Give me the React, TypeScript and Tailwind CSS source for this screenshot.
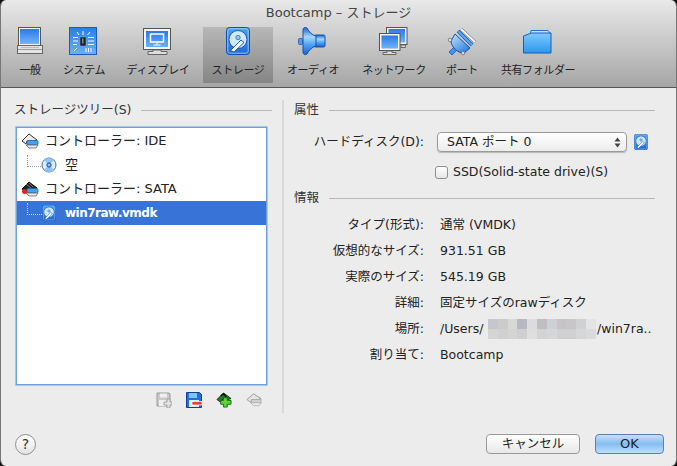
const font = "font-['DejaVu_Sans','Noto_Sans_CJK_JP',sans-serif]";

function MonitorIcon() {
  return (
    <svg width="32" height="32" viewBox="0 0 32 32">
      <defs>
        <linearGradient id="gen-screen" x1="0" y1="0" x2="0" y2="1">
          <stop offset="0" stopColor="#2f78e8" />
          <stop offset="1" stopColor="#6fb4fb" />
        </linearGradient>
      </defs>
      <rect x="4.5" y="0.5" width="22" height="18" fill="#f4f4f4" stroke="#555" />
      <rect x="6" y="2" width="19" height="15" fill="url(#gen-screen)" />
      <rect x="3.5" y="18.5" width="25" height="8" fill="#e4e4e4" stroke="#666" />
      <line x1="4" y1="22.500" x2="28" y2="22.500" stroke="#999" />
      <line x1="7" y1="20.500" x2="25" y2="20.500" stroke="#bbb" />
    </svg>
  );
}

function SystemIcon() {
  return (
    <svg width="32" height="32" viewBox="0 0 32 32">
      <defs>
        <linearGradient id="sys-bg" x1="0" y1="0" x2="0" y2="1">
          <stop offset="0" stopColor="#2a7de8" />
          <stop offset="1" stopColor="#67b2f8" />
        </linearGradient>
      </defs>
      <rect x="1.5" y="0.5" width="27" height="27" fill="url(#sys-bg)" stroke="#1c5cc0" />
      <rect x="12" y="10" width="6" height="9" fill="#222" stroke="#9ab" strokeWidth="0.5" />
      <rect x="14" y="11.500" width="1.500" height="5" fill="#888" />
      <g stroke="#fff" strokeWidth="1">
        <path d="M15 4v4M22 5l-2.500 3M5 10.500h5M5 14h5M5 17.500h4M20 10.500h6M20 14h6M20 17.500h6M6 24l3-3M9 5l2 3" />
        <path d="M18 21v4M20.500 21v4M23 21v4" />
      </g>
    </svg>
  );
}

function DisplayIcon() {
  return (
    <svg width="32" height="32" viewBox="0 0 32 32">
      <defs>
        <linearGradient id="dis-screen" x1="0" y1="0" x2="0" y2="1">
          <stop offset="0" stopColor="#2c78e6" />
          <stop offset="1" stopColor="#68b0fa" />
        </linearGradient>
      </defs>
      <rect x="1.5" y="1.500" width="27" height="21" fill="#f5f5f5" stroke="#555" />
      <rect x="4" y="4" width="22" height="16" fill="url(#dis-screen)" />
      <rect x="8.500" y="7" width="13" height="8" fill="none" stroke="#fff" strokeWidth="1.500" />
      <path d="M15 15v2.500M11.500 18h7" stroke="#fff" />
      <path d="M11 23h8v1.500h6v3H6v-3h5z" fill="#ddd" stroke="#666" />
    </svg>
  );
}

function DiskGlyph({ id }: { id: string }) {
  return (
    <>
      <defs>
        <linearGradient id={id} x1="0" y1="0" x2="0" y2="1">
          <stop offset="0" stopColor="#4aa2f4" />
          <stop offset="1" stopColor="#1f68da" />
        </linearGradient>
      </defs>
      <rect x="0.500" y="0.500" width="23" height="27" rx="3" fill={`url(#${id})`} stroke="#1350b0" />
      <rect x="1.800" y="1.800" width="20.400" height="24.400" rx="2" fill="none" stroke="#a8d6fc" strokeWidth="0.800" />
      <circle cx="12" cy="12.500" r="9" fill="#cfe8fc" stroke="#1450a8" strokeWidth="0.900" />
      <circle cx="12" cy="10.500" r="2.200" fill="#8fc5f3" stroke="#1450a8" strokeWidth="0.600" />
      <path d="M4.500 23.500L15 13l3 2.500L8 25z" fill="#f2faff" stroke="#1450a8" strokeWidth="0.900" />
    </>
  );
}

function StorageIcon() {
  return (
    <svg width="32" height="32" viewBox="-4 0 32 32">
      <DiskGlyph id="sto-bg" />
    </svg>
  );
}

function AudioIcon() {
  return (
    <svg width="32" height="32" viewBox="0 0 32 32">
      <defs>
        <linearGradient id="aud" x1="0" y1="0" x2="0" y2="1">
          <stop offset="0" stopColor="#1d5fd0" />
          <stop offset="0.35" stopColor="#a4d8fc" />
          <stop offset="0.65" stopColor="#4aa2f2" />
          <stop offset="1" stopColor="#1d5fd0" />
        </linearGradient>
      </defs>
      <rect x="17" y="8" width="11" height="12" rx="1.500" fill="url(#aud)" stroke="#174fa8" />
      <path d="M6 3C6 0 9 0 10 1c2 4 5 7 9 8v10c-4 1-7 4-9 8-1 1-4 1-4-2z" fill="url(#aud)" stroke="#174fa8" />
      <rect x="1.500" y="11.500" width="4" height="6" rx="1" fill="#5d95dd" stroke="#174fa8" strokeWidth="0.700" />
    </svg>
  );
}

function NetworkIcon() {
  return (
    <svg width="32" height="32" viewBox="0 0 32 32">
      <defs>
        <linearGradient id="net" x1="0" y1="0" x2="0" y2="1">
          <stop offset="0" stopColor="#2d78e6" />
          <stop offset="1" stopColor="#6db4fb" />
        </linearGradient>
      </defs>
      <rect x="8.500" y="0.500" width="20.500" height="17" fill="#f2f2f2" stroke="#555" />
      <rect x="10.500" y="2" width="16.500" height="13.500" fill="url(#net)" />
      <path d="M23 18h4.500v2.500H23z" fill="#ddd" stroke="#666" />
      <rect x="1.500" y="6.500" width="20.500" height="17" fill="#f5f5f5" stroke="#555" />
      <rect x="3.500" y="8.500" width="16.500" height="13" fill="url(#net)" />
      <path d="M9 24h5v1.500h4v2H5v-2h4z" fill="#ddd" stroke="#666" />
    </svg>
  );
}

function PortIcon() {
  return (
    <svg width="32" height="32" viewBox="0 0 32 32">
      <defs>
        <linearGradient id="port" x1="0" y1="0" x2="0.800" y2="1">
          <stop offset="0" stopColor="#c0e8fe" />
          <stop offset="1" stopColor="#2a7ce2" />
        </linearGradient>
      </defs>
      <path d="M3 25l5-5 3 3-5 5z" fill="#3f94ee" stroke="#174fa8" strokeWidth="0.700" />
      <path d="M9 7l15 14-6 5C13 27 5 20 5 14z" fill="url(#port)" stroke="#174fa8" />
      <path d="M12 4l14 14" stroke="#174fa8" strokeWidth="3.500" />
      <path d="M12 4l14 14" stroke="#56aaf5" strokeWidth="2.200" />
      <path d="M15 2l14 13" stroke="#666" strokeWidth="3" />
      <path d="M15 2l14 13" stroke="#f6f6f6" strokeWidth="1.900" />
      <circle cx="4" cy="13" r="1.800" fill="#ddd" stroke="#555" strokeWidth="0.600" />
      <circle cx="17" cy="26" r="1.800" fill="#ddd" stroke="#555" strokeWidth="0.600" />
    </svg>
  );
}

function FolderIcon() {
  return (
    <svg width="32" height="32" viewBox="0 0 32 32">
      <defs>
        <linearGradient id="fold" x1="0" y1="0" x2="0" y2="1">
          <stop offset="0" stopColor="#7fcbfb" />
          <stop offset="1" stopColor="#2c97ef" />
        </linearGradient>
      </defs>
      <path d="M9 3.500h17l2 2.500v4H8z" fill="#c5e6fb" stroke="#2a6fcb" />
      <path d="M1.500 9l8-3h19.500v20H1.500z" fill="url(#fold)" stroke="#1b5db8" />
    </svg>
  );
}

function ControllerIcon({ dark }: { dark?: boolean }) {
  return (
    <svg width="18" height="16" viewBox="0 0 18 16">
      <path d="M1 8l7-7 8 6-3 1H6l-1 3z" fill={dark ? "#222" : "#ececec"} stroke={dark ? "#111" : "#333"} />
      {dark && <path d="M5 3l5 4M8 2l4 4" stroke="#999" strokeWidth="0.700" />}
      <rect x="6" y="7.500" width="11" height="4.500" rx="1" fill="#45a0ef" stroke="#1d62c2" strokeWidth="0.800" />
      <path d="M5 12l3 3h7l2-3z" fill="#e8e8e8" stroke="#666" strokeWidth="0.800" />
      {dark && <circle cx="3.500" cy="10.500" r="2.500" fill="#d8281c" />}
    </svg>
  );
}

function DiscIcon() {
  return (
    <svg width="16" height="16" viewBox="0 0 16 16">
      <circle cx="8" cy="8" r="7" fill="#dcecfb" stroke="#4a6f9c" />
      <path d="M8 8L3 3a7 7 0 0 1 10 0z" fill="#8fc4f3" />
      <path d="M8 8l5 5a7 7 0 0 1-10 0z" fill="#8fc4f3" />
      <circle cx="8" cy="8" r="2.200" fill="#4f93dc" stroke="#2a5fa8" />
      <circle cx="8" cy="8" r="0.800" fill="#fff" />
    </svg>
  );
}

function SmallDisk({ id }: { id: string }) {
  return (
    <svg width="14" height="16" viewBox="0 0 24 28">
      <DiskGlyph id={id} />
    </svg>
  );
}

function AddAttachmentIcon() {
  return (
    <svg width="16" height="16" viewBox="0 0 16 16">
      <path d="M1 1h12l1 1v12H1z" fill="#c9c9c9" stroke="#9b9b9b" />
      <rect x="4" y="1.500" width="7" height="4" fill="#eee" />
      <rect x="3" y="8" width="7" height="6" fill="#eee" />
      <path d="M11 7v3H8v3h3v3h3v-3h2v-3h-2V7z" fill="#e2e2e2" stroke="#999" strokeWidth="0.800" />
    </svg>
  );
}

function RemoveAttachmentIcon() {
  return (
    <svg width="16" height="16" viewBox="0 0 16 16">
      <path d="M.5.500h13l2 2v13H.5z" fill="#1f6fe0" stroke="#0f3f9a" />
      <rect x="3" y="1" width="8" height="5" fill="#7fc4fb" />
      <rect x="3" y="8" width="10" height="7" fill="#dff0fd" />
      <rect x="6" y="9.500" width="10" height="3.500" fill="#e2452f" stroke="#fff" strokeWidth="0.700" />
    </svg>
  );
}

function AddControllerIcon() {
  return (
    <svg width="16" height="16" viewBox="0 0 17 17">
      <path d="M1 8l7-7 8 6-3 1H6l-1 3z" fill="#1f7a1f" stroke="#143f14" />
      <path d="M5 4l3-2 3 3" stroke="#111" strokeWidth="1.500" fill="none" />
      <path d="M8 6h4v3h4v4h-4v3H8v-3H5V9h3z" fill="#63d13c" stroke="#1a6b14" />
    </svg>
  );
}

function RemoveControllerIcon() {
  return (
    <svg width="16" height="16" viewBox="0 0 17 17">
      <path d="M1 8l7-6 8 5-3 1H6l-1 3z" fill="#e4e4e4" stroke="#9a9a9a" />
      <rect x="6" y="8" width="10" height="3.500" fill="#d0d0d0" stroke="#aaa" strokeWidth="0.800" />
      <path d="M5 11.500l3 3h6l2-3z" fill="#eee" stroke="#aaa" strokeWidth="0.800" />
    </svg>
  );
}

const tabs = [
  { label: "一般", width: "w-[44px]", icon: <MonitorIcon /> },
  { label: "システム", width: "w-[64px]", icon: <SystemIcon /> },
  { label: "ディスプレイ", width: "w-[84px]", icon: <DisplayIcon /> },
  { label: "ストレージ", width: "w-[70px]", icon: <StorageIcon />, selected: true },
  { label: "オーディオ", width: "w-[80px]", icon: <AudioIcon /> },
  { label: "ネットワーク", width: "w-[82px]", icon: <NetworkIcon /> },
  { label: "ポート", width: "w-[54px]", icon: <PortIcon /> },
  { label: "共有フォルダー", width: "w-[98px]", icon: <FolderIcon /> },
];

const infoRows = [
  { label: "タイプ(形式):", value: "通常 (VMDK)" },
  { label: "仮想的なサイズ:", value: "931.51 GB" },
  { label: "実際のサイズ:", value: "545.19 GB" },
  { label: "詳細:", value: "固定サイズのrawディスク" },
  { label: "場所:", value: "path" },
  { label: "割り当て:", value: "Bootcamp" },
];

const mosaic = [
  "bg-[#c4c8cc]", "bg-[#cbcbcb]", "bg-[#d8d8d5]", "bg-[#b8b8c0]", "bg-[#dcdcdc]", "bg-[#bdbdc2]", "bg-[#cdd0d4]", "bg-[#c5c5c8]", "bg-[#c8c6c6]", "bg-[#cfd2d4]", "bg-[#e4e4e4]",
  "bg-[#d4d4d4]", "bg-[#d0d0d0]", "bg-[#d4d4d2]", "bg-[#cfcfd2]", "bg-[#dedede]", "bg-[#d3d3d6]", "bg-[#d6d6d8]", "bg-[#d0d0d2]", "bg-[#d0d0d0]", "bg-[#d5d6d6]", "bg-[#d8dadb]",
];

function Section({ title, lineClass }: { title: string; lineClass: string }) {
  return (
    <div className="flex items-center h-[20px]">
      <span className="text-[12.5px] text-[#333] whitespace-nowrap">{title}</span>
      <div className={`h-px bg-[#b9b9b9] ${lineClass}`} />
    </div>
  );
}

export default function App() {
  return (
    <div className={`w-[677px] h-[466px] bg-[#111] overflow-hidden ${font}`}>
      <div className="h-full flex flex-col rounded-[6px] overflow-hidden border-x border-[#777]">
        <div className="h-[88px] shrink-0 flex flex-col bg-gradient-to-b from-[#e9e9e9] to-[#a6a6a6] border-b border-[#555]">
          <div className="h-[27px] pt-[4px] text-center text-[13px] leading-[17px] text-[#444]">Bootcamp – ストレージ</div>
          <div className="flex pl-[7px]">
            {tabs.map((tab) => (
              <div
                key={tab.label}
                className={`${tab.width} h-[56px] flex flex-col items-center ${
                  tab.selected ? "ml-[3px] bg-gradient-to-b from-[#b8b8b8] to-[#858585]" : ""
                }`}
              >
                {tab.icon}
                <span className="mt-[5px] text-[11px] leading-[14px] text-[#222] whitespace-nowrap tracking-[-0.4px]">{tab.label}</span>
              </div>
            ))}
          </div>
        </div>

        <div className="flex-1 bg-[#ececec] flex flex-col text-[#222]">
          <div className="flex h-[325px] shrink-0">
            <div className="w-[281px] shrink-0 pt-[12px] pl-[13px] pr-[10px]">
              <Section title="ストレージツリー(S)" lineClass="ml-[10px] flex-1" />
              <div className="mt-[7px] ml-[2px] mr-[5px] h-[258px] bg-white border border-[#6f9fd8] shadow-[0_0_0_1px_#a8c8ea] pt-[1px]">
                <div className="h-[24px] flex items-center pl-[4px] gap-[6px] text-[13px]">
                  <ControllerIcon />
                  <span>コントローラー: IDE</span>
                </div>
                <div className="h-[24px] flex items-center pl-[10px] text-[13px]">
                  <div className="w-[14px] h-[12px] mb-[9px] border-l border-b border-dotted border-[#999]" />
                  <DiscIcon />
                  <span className="ml-[8px]">空</span>
                </div>
                <div className="h-[24px] flex items-center pl-[4px] gap-[6px] text-[13px]">
                  <ControllerIcon dark />
                  <span>コントローラー: SATA</span>
                </div>
                <div className="h-[24px] flex items-center pl-[10px] text-[12px] bg-[#3874d8] text-white font-bold">
                  <div className="w-[15px] h-[12px] mb-[9px] border-l border-b border-dotted border-[#f0e8a0]" />
                  <SmallDisk id="disk-small" />
                  <span className="ml-[9px] tracking-[-0.5px]">win7raw.vmdk</span>
                </div>
              </div>
              <div className="flex justify-end gap-[14px] mt-[7px] pr-[10px]">
                <AddAttachmentIcon />
                <RemoveAttachmentIcon />
                <AddControllerIcon />
                <RemoveControllerIcon />
              </div>
            </div>

            <div className="w-[2px] h-[313px] mt-[12px] bg-[#d9d9d9] shrink-0" />

            <div className="flex-1 pt-[12px] pl-[10px] pr-[21px] text-[12.5px]">
              <Section title="属性" lineClass="ml-[10px] flex-1" />
              <div className="flex items-center mt-[12px] h-[20px]">
                <span className="w-[130px] text-right whitespace-nowrap">ハードディスク(D):</span>
                <div className="ml-[13px] w-[190px] h-[20px] flex items-center justify-between pl-[9px] pr-[5px] rounded-[4px] border border-[#9a9a9a] bg-gradient-to-b from-white to-[#ececec] shadow-[0_1px_1px_#bbb]">
                  <span className="whitespace-nowrap">SATA ポート 0</span>
                  <svg width="7" height="11" viewBox="0 0 7 11">
                    <path d="M3.500 0.500L6.500 4.500H.5zM3.500 10.500L.5 6.500h6z" fill="#444" />
                  </svg>
                </div>
                <div className="ml-[7px]">
                  <SmallDisk id="disk-attr" />
                </div>
              </div>
              <div className="flex items-center mt-[13px] ml-[141px] h-[14px]">
                <div className="w-[13px] h-[13px] rounded-[3px] border border-[#8f8f8f] bg-gradient-to-b from-white to-[#e6e6e6]" />
                <span className="ml-[5px] whitespace-nowrap">SSD(Solid-state drive)(S)</span>
              </div>
              <div className="mt-[9px]">
                <Section title="情報" lineClass="ml-[10px] flex-1" />
              </div>
              <div className="mt-[4px] flex flex-col">
                {infoRows.map((row) => (
                  <div key={row.label} className="flex items-center h-[26px]">
                    <span className="w-[130px] text-right whitespace-nowrap">{row.label}</span>
                    <div className="ml-[16px] whitespace-nowrap flex items-center">
                      {row.value === "path" ? (
                        <>
                          <span className="w-[48px]">/Users/</span>
                          <div className="w-[108px] grid grid-cols-11 h-[20px]">
                            {mosaic.map((c, i) => (
                              <div key={i} className={c} />
                            ))}
                          </div>
                          <span className="ml-[1px]">/win7ra..</span>
                        </>
                      ) : (
                        row.value
                      )}
                    </div>
                  </div>
                ))}
              </div>
            </div>
          </div>

          <div className="flex-1 flex items-start pt-[21px] pl-[14px] pr-[12px]">
            <div className="w-[21px] h-[21px] rounded-full border border-[#8f8f8f] bg-gradient-to-b from-white to-[#e4e4e4] flex items-center justify-center text-[14px] text-[#333]">?</div>
            <div className="ml-auto flex gap-[15px]">
              <div className="w-[94px] h-[20px] rounded-[4px] border border-[#9a9a9a] bg-gradient-to-b from-white to-[#e8e8e8] flex items-center justify-center text-[12.5px]">キャンセル</div>
              <div className="w-[69px] h-[20px] rounded-[4px] border border-[#5a7fb8] bg-gradient-to-b from-[#c6dff8] via-[#85bdf2] to-[#bfe0fb] flex items-center justify-center text-[13px]">OK</div>
            </div>
          </div>
        </div>
      </div>
    </div>
  );
}
